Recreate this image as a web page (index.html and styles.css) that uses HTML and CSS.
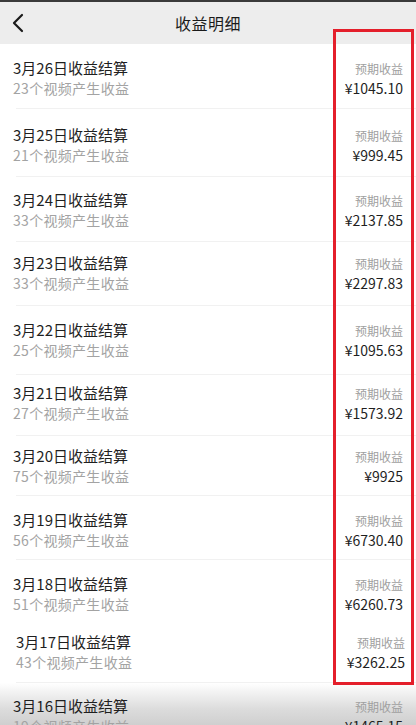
FILE: index.html
```html
<!DOCTYPE html>
<html lang="zh-CN">
<head>
<meta charset="utf-8">
<title>收益明细</title>
<link rel="stylesheet" href="styles.css">
</head>
<body>
<div class="page">
  <header class="topbar">
    <svg class="back" width="14" height="20" viewBox="0 0 14 20"><path d="M11 2 L3 10 L11 18" fill="none" stroke="#1a1a1a" stroke-width="2.2" stroke-linecap="round" stroke-linejoin="round"/></svg>
    <h1 class="title">收益明细</h1>
  </header>
  <ul class="list">
    <li class="row"><div class="left"><div class="r-title">3月26日收益结算</div><div class="r-sub">23个视频产生收益</div></div><div class="right"><div class="label">预期收益</div><div class="amount">¥1045.10</div></div></li>
    <li class="row"><div class="left"><div class="r-title">3月25日收益结算</div><div class="r-sub">21个视频产生收益</div></div><div class="right"><div class="label">预期收益</div><div class="amount">¥999.45</div></div></li>
    <li class="row"><div class="left"><div class="r-title">3月24日收益结算</div><div class="r-sub">33个视频产生收益</div></div><div class="right"><div class="label">预期收益</div><div class="amount">¥2137.85</div></div></li>
    <li class="row"><div class="left"><div class="r-title">3月23日收益结算</div><div class="r-sub">33个视频产生收益</div></div><div class="right"><div class="label">预期收益</div><div class="amount">¥2297.83</div></div></li>
    <li class="row"><div class="left"><div class="r-title">3月22日收益结算</div><div class="r-sub">25个视频产生收益</div></div><div class="right"><div class="label">预期收益</div><div class="amount">¥1095.63</div></div></li>
    <li class="row"><div class="left"><div class="r-title">3月21日收益结算</div><div class="r-sub">27个视频产生收益</div></div><div class="right"><div class="label">预期收益</div><div class="amount">¥1573.92</div></div></li>
    <li class="row"><div class="left"><div class="r-title">3月20日收益结算</div><div class="r-sub">75个视频产生收益</div></div><div class="right"><div class="label">预期收益</div><div class="amount">¥9925</div></div></li>
    <li class="row"><div class="left"><div class="r-title">3月19日收益结算</div><div class="r-sub">56个视频产生收益</div></div><div class="right"><div class="label">预期收益</div><div class="amount">¥6730.40</div></div></li>
    <li class="row"><div class="left"><div class="r-title">3月18日收益结算</div><div class="r-sub">51个视频产生收益</div></div><div class="right"><div class="label">预期收益</div><div class="amount">¥6260.73</div></div></li>
    <li class="row"><div class="left"><div class="r-title">3月17日收益结算</div><div class="r-sub">43个视频产生收益</div></div><div class="right"><div class="label">预期收益</div><div class="amount">¥3262.25</div></div></li>
    <li class="row"><div class="left"><div class="r-title">3月16日收益结算</div><div class="r-sub">19个视频产生收益</div></div><div class="right"><div class="label">预期收益</div><div class="amount">¥1465.15</div></div></li>
  </ul>
  <div class="highlight"></div>
</div>
</body>
</html>
```

FILE: styles.css
```css
* { box-sizing: border-box; }
html, body {
  margin: 0;
  padding: 0;
  background: #ffffff;
}
body {
  font-family: "Noto Sans CJK SC", "Noto Sans", sans-serif;
  color: #333;
  overflow: hidden;
}
.page {
  position: relative;
  width: 416px;
  height: 725px;
  overflow: hidden;
}
.topbar {
  height: 44px;
  background: #ededed;
  border-top: 2px solid #3a3a3a;
  display: flex;
  align-items: center;
  justify-content: center;
  position: relative;
}
.back {
  position: absolute;
  left: 11px;
  top: 11px;
}
.title {
  margin: 0;
  font-size: 16px;
  font-weight: 400;
  color: #1a1a1a;
  line-height: 20px;
  letter-spacing: 0.5px;
}
.list {
  list-style: none;
  margin: 0;
  padding: 0;
}
.row {
  display: flex;
  justify-content: space-between;
  align-items: flex-start;
  padding: 14px 13px 0 13px;
  height: 64px;
  position: relative;
}
.row::after {
  content: "";
  position: absolute;
  left: 16px;
  right: 0;
  bottom: 0;
  height: 1px;
  background: #f1f1f1;
}
.left, .right {
  display: flex;
  flex-direction: column;
}
.right { align-items: flex-end; }
.r-title {
  font-size: 15px;
  line-height: 20px;
  color: #1f1f1f;
  font-weight: 400;
}
.r-sub {
  font-size: 14px;
  line-height: 20px;
  color: #a3a3a3;
  letter-spacing: 0.3px;
}
.label {
  font-size: 12px;
  line-height: 20px;
  color: #a0a0a0;
  padding-top: 1px;
}
.amount {
  font-size: 14px;
  line-height: 19px;
  color: #1f1f1f;
  font-weight: 400;
}
.row:nth-child(1)  { height: 65px; padding-top: 14px; }
.row:nth-child(2)  { height: 68px; padding-top: 16px; }
.row:nth-child(3)  { height: 65px; padding-top: 13px; }
.row:nth-child(4)  { height: 64px; padding-top: 11px; }
.row:nth-child(5)  { height: 69px; padding-top: 14px; }
.row:nth-child(6)  { height: 61px; padding-top: 8px; }
.row:nth-child(7)  { height: 60px; padding-top: 10px; }
.row:nth-child(8)  { height: 64px; padding-top: 14px; }
.row:nth-child(9)  { height: 62px; padding-top: 14px; }
.row:nth-child(9)::after { display: none; }
.row:nth-child(10) { height: 61px; padding-top: 10px; padding-left: 16px; padding-right: 11px; }
.row:nth-child(11) {
  height: 60px;
  padding-top: 13px;
  background: linear-gradient(to bottom, #ffffff 0px, #f4f4f4 8px, #dcdcdc 26px, #cfcfcf 42px);
}
.row:nth-child(11)::after { display: none; }
.highlight {
  position: absolute;
  left: 333px;
  top: 29px;
  width: 81px;
  height: 656px;
  border: 3px solid #e41f2b;
  pointer-events: none;
}
```
